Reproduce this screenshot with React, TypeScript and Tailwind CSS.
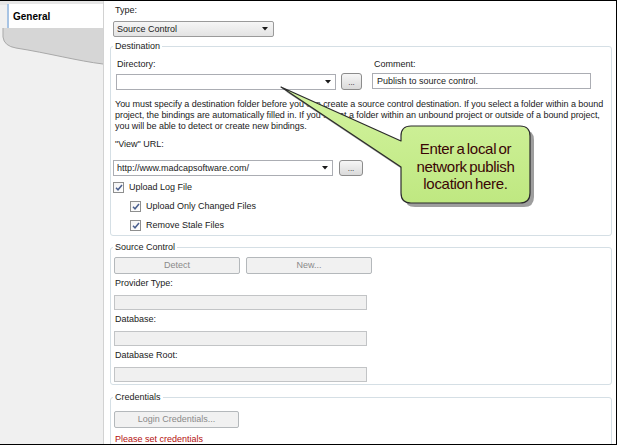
import React from "react";

const ui = "font-['Liberation_Sans',Arial,sans-serif] text-[9px] leading-[11px] text-[#1a1a1a]";

function Arrow() {
  return (
    <svg width="6" height="4" viewBox="0 0 6 4" className="shrink-0">
      <path d="M0 0 H6 L3 3.5 Z" fill="#1a1a1a" />
    </svg>
  );
}

function Combo({ value, className }: { value?: string; className: string }) {
  return (
    <div className={`flex items-center border border-[#abadb3] bg-white pl-[3px] pr-[4px] ${className}`}>
      <span className="flex-1 truncate">{value}</span>
      <Arrow />
    </div>
  );
}

function Browse({ className }: { className: string }) {
  return (
    <div
      className={`flex items-end justify-center rounded-[3px] border border-[#8c8c8c] bg-gradient-to-b from-[#f6f6f6] to-[#dadada] pb-[2px] text-[8px] leading-[8px] ${className}`}
    >
      ...
    </div>
  );
}

function Check({ label, className = "" }: { label: string; className?: string }) {
  return (
    <div className={`flex h-[19px] items-center gap-[5px] ${className}`}>
      <span className="flex h-[11px] w-[11px] items-center justify-center border border-[#8e8f8f] bg-gradient-to-br from-[#f4f4f4] to-white">
        <svg width="8" height="7" viewBox="0 0 8 7">
          <path d="M1 3.8 L3 5.8 L7 1" fill="none" stroke="#4a5f8e" strokeWidth="1.5" />
        </svg>
      </span>
      <span>{label}</span>
    </div>
  );
}

function DisabledButton({ label, className }: { label: string; className: string }) {
  return (
    <div
      className={`flex items-center justify-center rounded-[2px] border border-[#b4b8bb] bg-[#f1f1f1] text-[#8a8a8a] ${className}`}
    >
      {label}
    </div>
  );
}

function DisabledField({ label }: { label: string }) {
  return (
    <>
      <div className="mt-[4px] ml-[2px]">{label}</div>
      <div className="mt-[6px] ml-[1px] h-[15px] w-[253px] border border-[#c2c4c6] bg-[#f0f0f0]" />
    </>
  );
}

function Group({ title, className = "", children }: { title: string; className?: string; children: React.ReactNode }) {
  return (
    <fieldset className={`rounded-[3px] border border-[#d5dfe5] px-[2px] ${className}`}>
      <legend className="px-[2px] leading-[11px]">{title}</legend>
      {children}
    </fieldset>
  );
}

function Sidebar() {
  return (
    <aside className="relative w-[104px] shrink-0 border-r border-[#d2d2d2] bg-[#f0f0f0]">
      <svg width="103" height="70" viewBox="0 0 103 70" className="absolute left-0 top-0">
        <rect x="0" y="0" width="103" height="4" fill="#e6e6e6" />
        <path d="M3 27 H103 V63 C78 60 48 52 16 47 Q4 45 3 36 Z" fill="#d6d6d6" />
        <path d="M3 27 V36 Q4 45 16 47 C48 52 78 60 103 63" fill="none" stroke="#a9a9a9" strokeWidth="1" />
      </svg>
      <div className="relative ml-[7px] mt-[3px] flex h-[24px] items-center border-l-2 border-[#a8c4e4] bg-white pl-[4px] text-[10px] font-bold text-black">
        General
      </div>
    </aside>
  );
}

function Callout() {
  const d =
    "M411 125 H520 Q530 125 530 135 V192 Q530 202 520 202 H411 Q401 202 401 192 V166 L281 86 L401 140 V135 Q401 125 411 125 Z";
  return (
    <>
      <svg width="617" height="445" viewBox="0 0 617 445" className="pointer-events-none absolute left-0 top-0">
        <defs>
          <linearGradient id="g" x1="0" y1="0" x2="0" y2="1">
            <stop offset="0" stopColor="#d3f3a0" />
            <stop offset="1" stopColor="#bfe881" />
          </linearGradient>
        </defs>
        <path d={d} transform="translate(4 4)" fill="#7d7d7d" opacity="0.75" />
        <path d={d} fill="url(#g)" stroke="#2b2b2b" strokeWidth="1.2" strokeLinejoin="round" />
      </svg>
      <div className="pointer-events-none absolute left-[401px] top-[139px] w-[129px] text-center font-['Liberation_Sans',Arial,sans-serif] text-[15px] leading-[17.5px] tracking-[-0.3px] [word-spacing:-1.5px] text-[#3a0505]">
        Enter a local or
        <br />
        network publish
        <br />
        location here.
      </div>
    </>
  );
}

export default function App() {
  return (
    <div className={`relative flex h-[445px] w-[617px] overflow-hidden border-y border-r border-black bg-white ${ui}`}>
      <Sidebar />
      <main className="flex-1 pl-[6px] pr-[4px] pt-[4px]">
        <div className="ml-[5px]">Type:</div>
        <div className="mt-[5px] ml-[3px] flex h-[16px] w-[161px] items-center rounded-[2px] border border-[#9a9a9a] bg-gradient-to-b from-[#f6f6f6] to-[#e3e3e3] pl-[3px] pr-[5px]">
          <span className="flex-1">Source Control</span>
          <Arrow />
        </div>

        <Group title="Destination" className="mt-[4px]">
          <div className="mt-[7px] flex">
            <div>
              <div className="ml-[4px]">Directory:</div>
              <div className="mt-[3px] flex items-center">
                <Combo className="ml-[3px] h-[16px] w-[220px]" />
                <Browse className="ml-[5px] h-[17px] w-[21px]" />
              </div>
            </div>
            <div className="ml-[10px]">
              <div className="ml-[2px]">Comment:</div>
              <div className="mt-[3px] flex h-[16px] w-[219px] items-center border border-[#abadb3] bg-white pl-[4px]">
                Publish to source control.
              </div>
            </div>
          </div>
          <p className="mt-[9px] ml-[2px] whitespace-nowrap tracking-[-0.05px]">
            You must specify a destination folder before you can create a source control destination. If you select a folder within a bound
            <br />
            project, the bindings are automatically filled in. If you select a folder within an unbound project or outside of a bound project,
            <br />
            you will be able to detect or create new bindings.
          </p>
          <div className="mt-[7px] ml-[2px]">"View" URL:</div>
          <div className="mt-[10px] flex items-center">
            <Combo value="http://www.madcapsoftware.com/" className="h-[16px] w-[220px]" />
            <Browse className="ml-[6px] h-[16px] w-[24px]" />
          </div>
          <div className="mt-[2px]">
            <Check label="Upload Log File" />
            <Check label="Upload Only Changed Files" className="ml-[17px]" />
            <Check label="Remove Stale Files" className="ml-[17px]" />
          </div>
        </Group>

        <Group title="Source Control" className="mt-[6px] pb-[2px]">
          <div className="mt-[4px] ml-[1px] flex gap-[6px]">
            <DisabledButton label="Detect" className="h-[17px] w-[126px]" />
            <DisabledButton label="New..." className="h-[17px] w-[126px]" />
          </div>
          <DisabledField label="Provider Type:" />
          <DisabledField label="Database:" />
          <DisabledField label="Database Root:" />
        </Group>

        <Group title="Credentials" className="mt-[7px] h-[60px]">
          <DisabledButton label="Login Credentials..." className="mt-[8px] ml-[1px] h-[17px] w-[125px]" />
          <div className="mt-[6px] ml-[2px] text-[#b40d0d]">Please set credentials</div>
        </Group>
      </main>
      <Callout />
    </div>
  );
}
